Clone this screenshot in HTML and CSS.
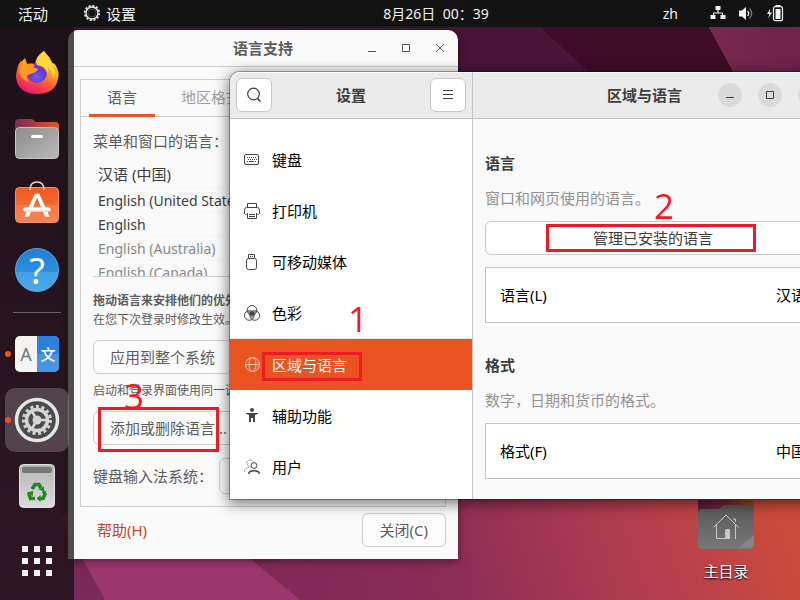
FILE: index.html
```html
<!DOCTYPE html>
<html lang="zh-CN">
<head>
<meta charset="utf-8">
<title>区域与语言</title>
<link rel="stylesheet" href="styles.css">
</head>
<body>
<header class="topbar">
  <nav class="topbar-left">
    <button class="top-item">活动</button>
    <button class="top-item">
      <svg width="18" height="18" viewBox="0 0 18 18" fill="none" stroke="#e8e8e8"><circle cx="9" cy="8" r="7.3" stroke-width="1.6" stroke-dasharray="2.3 1.52"/><circle cx="9" cy="8" r="6" stroke-width="1.4"/><circle cx="9" cy="8" r="3.900" stroke="#666" stroke-width=".6"/></svg>
      设置
    </button>
  </nav>
  <time class="clock">8月26日&nbsp; 00：39</time>
  <div class="tray">
    <span class="input-source">zh</span>
    <svg width="16" height="16" viewBox="0 0 16 16" fill="#f2f2f2"><path d="M5.500 0h5v4H8.600v2.500H13V9h2.500v4h-5V9H12V7.500H4V9h1.500v4h-5V9H3V6.500h4.400V4H5.500z"/></svg>
    <svg width="16" height="16" viewBox="0 0 16 16" fill="none"><path fill="#f2f2f2" d="M1 4.500h3l4-3.500v13l-4-3.500H1z"/><path d="M9.500 5q2.500 2.500 0 5" stroke="#ddd" stroke-width="1.400"/><path d="M11.500 2.500q4.500 5 0 10" stroke="#777" stroke-width="1.200"/></svg>
    <svg width="18" height="18" viewBox="0 0 18 18"><path fill="#f2f2f2" d="M4.300 3.500L1 9h2.500L2 13.500l4-6H3.600z"/><path fill="#f2f2f2" d="M9.500 0h5v2h-5zM9.500 4h5v10h-5z"/><rect x="7.500" y="1.700" width="9" height="14" rx="2" fill="none" stroke="#f2f2f2" stroke-width="1.200"/></svg>
  </div>
</header>

<main class="desktop">
  <svg class="wallpaper" viewBox="0 27 800 573" preserveAspectRatio="none" aria-hidden="true">
    <defs>
      <linearGradient id="wall" gradientUnits="userSpaceOnUse" x1="300" y1="580" x2="760" y2="440"><stop offset="0" stop-color="#832957"/><stop offset=".28" stop-color="#8a2c57"/><stop offset=".68" stop-color="#b13d4f"/><stop offset="1" stop-color="#cb4b3c"/></linearGradient>
      <linearGradient id="dusk" x1="0" y1="0" x2="0" y2="1"><stop offset="0" stop-color="#3c1030"/><stop offset="1" stop-color="#7b2958"/></linearGradient>
      <linearGradient id="ridge" x1="0" y1="0" x2="1" y2="0"><stop offset="0" stop-color="#772850"/><stop offset="1" stop-color="#6e234a"/></linearGradient>
    </defs>
    <path fill="url(#wall)" d="M0 27h800v573H0z"/>
    <path fill="url(#dusk)" d="M0 27h280v532L105 600H0z"/>
    <path fill="#4b1438" d="M74 27h510l60 60H74z"/>
    <path fill="#3d0c28" d="M540 27h169l60 110-115-5z"/>
    <path fill="url(#ridge)" d="M709 27h91v110h-31z"/>
    <path fill="#9c366e" d="M60 517h140l100 83H105z"/>
  </svg>

  <section class="window support" aria-label="语言支持">
    <header class="support-bar">
      <h1>语言支持</h1>
      <div class="plain-controls">
        <button aria-label="最小化"><svg width="10" height="10"><path d="M1 8.500h8" stroke="#555"/></svg></button>
        <button aria-label="最大化"><svg width="10" height="10"><path d="M1.500 1.500h7v7h-7z" fill="none" stroke="#555"/></svg></button>
        <button aria-label="关闭"><svg width="10" height="10"><path d="M1 1l8 8M9 1l-8 8" stroke="#555"/></svg></button>
      </div>
    </header>
    <div class="panel">
      <div class="tabs" role="tablist">
        <button class="tab tab-on" role="tab" aria-selected="true">语言</button>
        <button class="tab" role="tab">地区格式</button>
      </div>
      <div class="panel-body">
        <h2 class="field-label">菜单和窗口的语言：</h2>
        <ul class="languages">
          <li class="native">汉语 (中国)</li>
          <li>English (United States)</li>
          <li>English</li>
          <li class="off">English (Australia)</li>
          <li class="off">English (Canada)</li>
        </ul>
        <p class="hint"><strong>拖动语言来安排他们的优先顺序。</strong><br>在您下次登录时修改生效。</p>
        <button class="btn">应用到整个系统</button>
        <p class="note">启动和登录界面使用同一语言。</p>
        <button class="btn">添加或删除语言...</button>
        <div class="input-row">
          <label for="method">键盘输入法系统：</label>
          <select id="method" class="method"><option>IBus</option></select>
        </div>
      </div>
    </div>
    <footer class="support-foot">
      <a href="#help">帮助(H)</a>
      <button class="btn">关闭(C)</button>
    </footer>
  </section>

  <a class="home" href="#home">
    <svg width="56" height="50" viewBox="0 0 56 50">
      <defs><linearGradient id="hf" x1="0" y1="0" x2="1" y2="0"><stop offset="0" stop-color="#551b42"/><stop offset=".5" stop-color="#74233a"/><stop offset="1" stop-color="#a6431c"/></linearGradient><linearGradient id="hg" x1="0" y1="0" x2="0" y2="1"><stop offset="0" stop-color="#585858"/><stop offset="1" stop-color="#787878"/></linearGradient></defs>
      <path fill="url(#hf)" d="M0 0h53q3 0 3 4v12H0z"/><path fill="url(#hg)" d="M0 13q0-4 4-4h17l5-4h26q4 0 4 4v35q0 5-5 5H5q-5 0-5-5z"/><path fill="#858585" d="M56 35v9q0 4-5 4H40z"/>
      <path d="M15.500 27.500L28 15l12.500 12.500M18.500 25v13.500h9M37.500 25v14M35 19h2.500v3" fill="none" stroke="#c8c8c8"/><path fill="#c8c8c8" d="M27 39v-9l2-1h2l1 1v9z"/>
    </svg>
    <span>主目录</span>
  </a>

  <section class="window settings" aria-label="设置">
    <aside class="sidebar">
      <header class="side-bar">
        <button class="square" aria-label="搜索"><svg width="16" height="16" viewBox="0 0 16 16" fill="none" stroke="#3d3d3d" stroke-width="1.200"><circle cx="7.500" cy="7" r="5.800"/><path d="M11.500 11.500l3 3" stroke-width="1.600"/></svg></button>
        <h1>设置</h1>
        <button class="square" aria-label="菜单"><svg width="16" height="16"><path d="M3 3.500h10M3 7.500h10M3 11.500h10" stroke="#3d3d3d"/></svg></button>
      </header>
      <nav class="side-list">
        <a href="#keyboard"><svg width="16" height="16" viewBox="0 0 16 16" fill="none" stroke="#444"><rect x=".5" y="2.500" width="14" height="10" rx="1.500"/><path d="M3 5.500h10M4 7.500h9" stroke-dasharray="1 1"/><path d="M3 9.500h1M5 9.500h5M11 9.500h1"/></svg>键盘</a>
        <a href="#printers"><svg width="16" height="16" viewBox="0 0 16 16" fill="none" stroke="#444"><path d="M3.500 4V.5h9V4M2.500 11.500h-1l-1-1V7q0-2.500 2.500-2.500h10q2.500 0 2.500 2.500v3.500l-1 1h-1M3.500 10v5.500h9V10M5 11.500h6M5 13.500h6"/></svg>打印机</a>
        <a href="#media"><svg width="16" height="16" viewBox="0 0 16 16" fill="none" stroke="#444"><path d="M4.500 4V.5h6V4M6 2.500h1M8 2.500h1"/><rect x="2.500" y="4.500" width="10" height="11" rx="2"/></svg>可移动媒体</a>
        <a href="#color"><svg width="16" height="16" viewBox="0 0 16 16" fill="none" stroke="#444"><path fill="#999" stroke="none" d="M8 5.500L3.500 6.500l2 4 2.500 3 2.500-3 2-4z"/><circle cx="8" cy="5.300" r="4.800"/><circle cx="5.300" cy="10.500" r="4.800"/><circle cx="10.700" cy="10.500" r="4.800"/><path fill="#444" stroke="none" d="M8 6.500l-2.500 1q0 2 2.500 3 2.500-1 2.500-3z"/></svg>色彩</a>
        <a href="#region" class="current"><svg width="16" height="16" viewBox="0 0 16 16" fill="none" stroke="#f6cdbd"><circle cx="8.500" cy="7.500" r="7"/><ellipse cx="8.500" cy="7.500" rx="3.500" ry="7"/><path d="M1.500 7.500h14"/></svg>区域与语言</a>
        <a href="#access"><svg width="16" height="16" viewBox="0 0 16 16" fill="#444"><circle cx="8" cy="2" r="2"/><path d="M2 5h12v1l-3 .8V14H9v-4H7v4H5V6.800L2 6z"/></svg>辅助功能</a>
        <a href="#users"><svg width="16" height="16" viewBox="0 0 16 16" fill="none" stroke="#444"><path stroke="#aaa" d="M6.500 7.200a3.200 3.200 0 1 1 2.500-4.500M.5 13v-1q0-3 4.500-3.500"/><circle cx="10" cy="6.500" r="2.900"/><path stroke-width="1.400" d="M4.700 15q0-3.300 5.300-3.300t5.300 3.300"/></svg>用户</a>
      </nav>
    </aside>
    <div class="content">
      <header class="content-bar">
        <h1>区域与语言</h1>
        <div class="round-controls">
          <button aria-label="最小化"><svg width="10" height="10"><path d="M1 7.500h8" stroke="#3d3d3d"/></svg></button>
          <button aria-label="最大化"><svg width="10" height="10"><path d="M1.500 1.500h7v7h-7z" fill="none" stroke="#3d3d3d"/></svg></button>
          <button aria-label="关闭"><svg width="10" height="10"><path d="M1 1l8 8M9 1l-8 8" stroke="#3d3d3d"/></svg></button>
        </div>
      </header>
      <div class="content-body">
        <section>
          <h2>语言</h2>
          <p>窗口和网页使用的语言。</p>
          <button class="wide">管理已安装的语言</button>
          <button class="setting"><span>语言(L)</span><span>汉语</span></button>
        </section>
        <section>
          <h2>格式</h2>
          <p>数字，日期和货币的格式。</p>
          <button class="setting"><span>格式(F)</span><span>中国</span></button>
        </section>
      </div>
    </div>
  </section>

  <nav class="dock" aria-label="应用程序">
    <button class="app" aria-label="Firefox"><svg width="48" height="48" viewBox="0 0 48 48">
      <defs><linearGradient id="fx" x1=".8" y1="0" x2=".3" y2="1"><stop offset="0" stop-color="#fff04a"/><stop offset=".35" stop-color="#ffb12b"/><stop offset=".65" stop-color="#ff5a38"/><stop offset="1" stop-color="#e4146f"/></linearGradient><radialGradient id="fp" cx=".5" cy=".7" r=".7"><stop offset="0" stop-color="#6f5cf0"/><stop offset=".6" stop-color="#6239c8"/><stop offset="1" stop-color="#a52bd0"/></radialGradient></defs>
      <path fill="url(#fx)" d="M4 22q1-6 4-9l0 5 4-7 2 5q4-1 8 0 1-8 9-13 1 5 6 9l2 3q3 0 4 3 4 7 2 13-3 15-21 15Q5 46 3 29q0-4 1-7z"/>
      <circle cx="24" cy="25" r="10" fill="url(#fp)"/><path fill="#ff9a22" d="M8 14l4-4 2 6q4-1 8 1l-2 2 5 2q-1 3-5 4l-5 2q-3 3 1 7-8-2-10-10z"/><path fill="#ffd83d" d="M31 3q-9 7-7 14 8 1 10 8 2-4 0-7 6 5 6 13 4-7 0-15-3-7-9-13z"/><path fill="#ffb02e" d="M39 15q8 7 4 17 1-7-1-8 0-5-3-9z"/>
    </svg></button>
    <button class="app" aria-label="文件"><svg width="48" height="48" viewBox="0 0 48 48">
      <defs><linearGradient id="ff" x1="0" y1="0" x2="1" y2="0"><stop offset="0" stop-color="#7b2b5a"/><stop offset="1" stop-color="#e95420"/></linearGradient><linearGradient id="fg" x1="0" y1="0" x2="1" y2="1"><stop offset="0" stop-color="#8c8c8c"/><stop offset="1" stop-color="#b9b9b9"/></linearGradient></defs>
      <path fill="url(#ff)" d="M2 9q0-4 4-4h13l4 3h19q4 0 4 4v12H2z"/><rect x="2.500" y="13.500" width="43" height="31" rx="4" fill="url(#fg)" stroke="#c6c6c6"/><rect x="18" y="21" width="12" height="3" rx="1.500" fill="#fff"/>
    </svg></button>
    <button class="app" aria-label="软件"><svg width="48" height="48" viewBox="0 0 48 48">
      <defs><linearGradient id="st" x1="0" y1="0" x2="0" y2="1"><stop offset="0" stop-color="#f05a22"/><stop offset=".5" stop-color="#f2692f"/><stop offset=".51" stop-color="#f47a48"/><stop offset="1" stop-color="#f58250"/></linearGradient></defs>
      <rect x="2.500" y="7.500" width="43" height="35" rx="4" fill="url(#st)" stroke="#f79265"/><path d="M17 10q0-8 7-8t7 8" fill="none" stroke="#f5dcae" stroke-width="1.500"/><path d="M21.500 13h5L38 36h-5l-9-19-9 19h-5z" transform="translate(2.400 1) scale(.9 .99)" fill="#fff"/><path d="M12.500 29.500h23" stroke="#fff" stroke-width="4.500" stroke-linecap="round"/><path d="M12 31h24" stroke="#f3b9a0"/>
    </svg></button>
    <button class="app help" aria-label="帮助"><span>?</span></button>
    <hr>
    <button class="app running lang" aria-label="语言支持"><span class="lang-tile"><span>A</span><span class="lang-to">文</span></span></button>
    <button class="app running active" aria-label="设置"><svg width="48" height="48" viewBox="0 0 48 48">
      <circle cx="24" cy="24" r="20.500" fill="#4b4b4b" stroke="#e6e6e6" stroke-width="3.500"/><circle cx="24" cy="24" r="13.500" fill="none" stroke="#d5d5d5" stroke-width="3" stroke-dasharray="3 2.650"/><circle cx="24" cy="24" r="10.500" fill="none" stroke="#d5d5d5" stroke-width="3.500"/><circle cx="24" cy="24" r="4.500" fill="#d5d5d5"/><path d="M24 24h10M24 24l-5 8.500M24 24l-5-8.500" stroke="#d5d5d5" stroke-width="2.500"/>
    </svg></button>
    <button class="app" aria-label="回收站"><svg width="48" height="48" viewBox="0 0 48 48">
      <defs><linearGradient id="tr" x1="0" y1="0" x2="0" y2="1"><stop offset="0" stop-color="#b5b5b5"/><stop offset="1" stop-color="#dcdcdc"/></linearGradient></defs>
      <rect x="6.500" y="2.500" width="35" height="43" rx="4" fill="url(#tr)" stroke="#e2e2e2"/><rect x="9" y="5" width="30" height="6" rx="2" fill="#777"/>
      <g fill="none" stroke="#23891f" stroke-width="3.600"><path d="M19 27l3-4.500h4l2 3.500M30.500 29l1.500 3-2 4.500h-3M22 36.500h-4.500L16 32l1-1.500"/></g><path fill="#23891f" d="M25.500 27.500l5.500-3v5zM27.500 33v7l-4-3.500zM14.500 30.500l5.500-1.500v5z"/>
    </svg></button>
    <button class="app show-apps" aria-label="显示应用程序"><svg width="30" height="30" viewBox="0 0 30 30" fill="#f2f2f2"><path d="M0 0h6v6H0zM12 0h6v6h-6zM24 0h6v6h-6zM0 12h6v6H0zM12 12h6v6h-6zM24 12h6v6h-6zM0 24h6v6H0zM12 24h6v6h-6zM24 24h6v6h-6z"/></svg></button>
  </nav>

  <span class="mark mark-1"></span><span class="step step-1">1</span>
  <span class="mark mark-2"></span><span class="step step-2">2</span>
  <span class="mark mark-3"></span><span class="step step-3">3</span>
</main>
</body>
</html>
```
FILE: styles.css
```css
* { box-sizing: border-box; }

body {
  margin: 0;
  height: 100vh;
  overflow: hidden;
  display: flex;
  flex-direction: column;
  background: #832957;
  font: 15px/22px "Noto Sans", "Noto Sans CJK SC", sans-serif;
  color: #000;
}

h1, h2, p, ul { margin: 0; padding: 0; font-size: inherit; }
button, select { font: inherit; color: inherit; border: 0; padding: 0; background: none; }
a { color: inherit; text-decoration: none; }
svg { display: block; flex: none; }

/* Top bar */
.topbar {
  flex: none;
  height: 27px;
  display: grid;
  grid-template-columns: 1fr auto 1fr;
  align-items: center;
  background: #131313;
  color: #f2f2f2;
}
.topbar-left { display: flex; gap: 35px; padding-left: 18px; }
.top-item { display: flex; align-items: center; gap: 5px; }
.clock { font-size: 14px; padding-left: 72px; }
.tray { display: flex; align-items: center; justify-content: flex-end; gap: 12px; padding-right: 16px; }
.input-source { font-size: 14px; margin-right: 20px; }

.desktop { position: relative; flex: 1; overflow: hidden; }
.wallpaper { position: absolute; inset: 0; width: 100%; height: 100%; }

.window { position: absolute; }

/* Language support window */
.support {
  left: 68px;
  top: 3px;
  width: 390px;
  padding-bottom: 12px;
  border-radius: 10px 10px 0 0;
  background: #fafafa;
  color: #5c5c5c;
  box-shadow: 0 2px 8px rgba(0, 0, 0, .45);
}
.support-bar {
  position: relative;
  height: 37px;
  display: flex;
  align-items: center;
  justify-content: center;
  border-bottom: 1px solid #cdcdcd;
}
.plain-controls { position: absolute; right: 13px; display: flex; gap: 24px; }
.panel { margin: 12px 12px 0; border: 1px solid #cdcdcd; }
.tabs { display: flex; height: 37px; padding-left: 8px; border-bottom: 1px solid #cdcdcd; }
.tab { height: 37px; padding: 0 18px; color: #a0a0a0; border-bottom: 3px solid transparent; }
.tab + .tab { margin-left: 8px; }
.tab-on { color: #5c5c5c; border-bottom-color: #e95420; }
.panel-body { padding: 13px 12px 12px; }
.field-label { font-weight: 400; }
.languages {
  height: 118px;
  margin-top: 7px;
  overflow: hidden;
  list-style: none;
  border-bottom: 1px solid #cdcdcd;
  font-size: 14px;
  color: #3d3d3d;
}
.languages li { height: 24px; line-height: 24px; padding-left: 5px; border-bottom: 1px solid #f5f5f5; }
.languages .native { height: 30px; line-height: 30px; font-size: 15px; }
.languages .off { color: #888; }
.hint { margin-top: 14px; font-size: 12px; line-height: 19px; }
.note { margin: 7px 0 10px; font-size: 12px; line-height: 20px; }
.btn {
  display: block;
  height: 34px;
  padding: 0 16px;
  border: 1px solid #cdcdcd;
  border-radius: 6px;
  background: #fcfcfc;
}
.hint + .btn { margin-top: 11px; }
.input-row { display: flex; align-items: center; gap: 6px; margin-top: 13px; }
.method { flex: 1; height: 36px; border: 1px solid #cdcdcd; border-radius: 6px; background: #fcfcfc; padding: 0 12px; }
.support-foot { display: flex; align-items: center; justify-content: space-between; padding: 6px 12px 0 29px; }
.support-foot a { color: #c7461f; }
.support-foot .btn { padding: 0 17px; }

/* Settings window */
.settings {
  left: 230px;
  right: -33px;
  top: 45px;
  display: flex;
  border-radius: 10px 10px 0 0;
  background: #fafafa;
  box-shadow: 0 0 0 1px rgba(0, 0, 0, .3), 0 3px 14px 2px rgba(0, 0, 0, .5);
}
.sidebar { flex: none; width: 243px; border-right: 1px solid #c4c4c4; background: #fff; border-radius: 10px 0 0 0; }
.side-bar, .content-bar {
  height: 47px;
  background: #ebebeb;
  border-bottom: 1px solid #bfbfbf;
  border-top: 1px solid #fff;
  color: #3d3d3d;
}
.side-bar { display: flex; align-items: center; justify-content: space-between; padding: 0 6px 1px; border-radius: 10px 0 0 0; }
.square { display: grid; place-items: center; width: 36px; height: 34px; border: 1px solid #c8c8c8; border-radius: 6px; background: #fff; }
.side-list { padding: 15px 0 7px; }
.side-list a { display: flex; align-items: center; gap: 12px; height: 51px; padding: 0 14px; }
.side-list .current { height: 52px; border-top: 1px solid #e4e4e4; background: #e95420; color: #fff; }
.content { flex: 1; min-width: 0; }
.content-bar { display: grid; grid-template-columns: 1fr auto 1fr; align-items: center; padding: 0 11px 1px 0; }
.content-bar h1 { grid-column: 2; padding-right: 6px; }
.round-controls { display: flex; justify-content: flex-end; gap: 16px; }
.round-controls button { display: grid; place-items: center; width: 24px; height: 24px; border-radius: 50%; background: #dadada; }
.content-body { padding: 33px 12px 20px; display: flex; flex-direction: column; gap: 31px; }
.content-body h2 { color: #3d3d3d; }
.content-body p { margin: 13px 0 12px; color: #929292; }
.wide { display: block; width: 100%; height: 34px; margin-bottom: 12px; border: 1px solid #c8c8c8; border-radius: 6px; background: #fff; color: #3d3d3d; }
.setting { display: flex; align-items: center; justify-content: space-between; width: 100%; height: 56px; padding: 0 14px; border: 1px solid #c4c4c4; background: #fff; }

/* Desktop shortcut */
.home { position: absolute; left: 698px; top: 473px; display: flex; flex-direction: column; align-items: center; gap: 10px; color: #fff; text-shadow: 0 1px 2px #000; }

/* Dock */
.dock {
  position: absolute;
  inset: 0 auto 0 0;
  width: 74px;
  display: flex;
  flex-direction: column;
  align-items: center;
  gap: 2px;
  padding: 13px 0 7px;
  background: rgba(20, 17, 19, .75);
}
.app { position: relative; flex: none; display: grid; place-items: center; width: 64px; height: 64px; border-radius: 10px; }
.active { background: rgba(255, 255, 255, .2); }
.running::before { content: ""; position: absolute; left: 0; top: 29px; width: 6px; height: 6px; border-radius: 50%; background: #e95420; }
.dock hr { width: 48px; height: 1px; margin: 8px 0 7px; border: 0; background: #6b5d66; }
.help span { width: 44px; height: 44px; border-radius: 50%; border: 1px solid #62a9e4; background: linear-gradient(#1f7fd6, #2c8fdf 54%, #42a0e4 55%, #4aa9ea); color: #fff; font-size: 36px; line-height: 44px; }
.lang-tile { display: grid; grid-template-columns: 1fr 1fr; width: 44px; height: 36px; overflow: hidden; border-radius: 5px; background: #f4f3f1; color: #777; font-size: 18px; line-height: 36px; }
.lang-to { font-size: 15px; font-weight: 500; color: #fff; background: linear-gradient(#2f7fdd 50%, #4a92e4 50%); }
.show-apps { margin-top: auto; }

/* Numbered callouts */
.mark { position: absolute; border: 3px solid #ed1c24; }
.mark-1 { left: 262px; top: 325px; width: 100px; height: 29px; }
.mark-2 { left: 546px; top: 197px; width: 210px; height: 28px; }
.mark-3 { left: 98px; top: 380px; width: 121px; height: 45px; }
.step { position: absolute; color: #ed1c24; font: 35px/36px "Open Sans", "Noto Sans", sans-serif; }
.step-1 { left: 348px; top: 274px; }
.step-2 { left: 654px; top: 161px; }
.step-3 { left: 124px; top: 351px; }
```
